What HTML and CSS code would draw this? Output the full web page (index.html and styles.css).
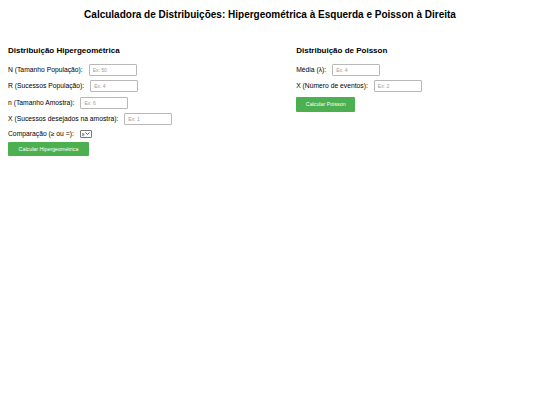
FILE: index.html
```html
<!DOCTYPE html>
<html lang="pt-BR">
<head>
  <meta charset="UTF-8">
  <meta name="viewport" content="width=device-width, initial-scale=1.0">
  <title>Calculadora de Distribuições</title>
  <link rel="stylesheet" href="styles.css">
</head>
<body>
  <h1>Calculadora de Distribuições: Hipergeométrica à Esquerda e Poisson à Direita</h1>

  <div class="container">
    <div class="coluna">
      <h3>Distribuição Hipergeométrica</h3>
      <div class="campo">
        <label for="N">N (Tamanho População):</label>
        <input type="number" id="N" placeholder="Ex: 50">
      </div>
      <div class="campo">
        <label for="R">R (Sucessos População):</label>
        <input type="number" id="R" placeholder="Ex: 4">
      </div>
      <div class="campo">
        <label for="n">n (Tamanho Amostra):</label>
        <input type="number" id="n" placeholder="Ex: 6">
      </div>
      <div class="campo">
        <label for="x">X (Sucessos desejados na amostra):</label>
        <input type="number" id="x" placeholder="Ex: 1">
      </div>
      <div class="campo">
        <label for="comparacao">Comparação (≥ ou =):</label>
        <span class="seletor">
          <select id="comparacao">
            <option value="maior">≥</option>
            <option value="igual">=</option>
          </select>
          <svg class="seta" viewBox="0 0 10 6" width="5" height="3"><path d="M1 1l4 4 4-4" fill="none" stroke="#333" stroke-width="1.6"/></svg>
        </span>
      </div>
      <button id="btnHiper" class="btn-hiper">Calcular Hipergeométrica</button>
      <p id="resultadoHiper" class="resultado"></p>
    </div>

    <div class="coluna">
      <h3>Distribuição de Poisson</h3>
      <div class="campo">
        <label for="lambda">Média (λ):</label>
        <input type="number" id="lambda" placeholder="Ex: 4">
      </div>
      <div class="campo">
        <label for="xPoisson">X (Número de eventos):</label>
        <input type="number" id="xPoisson" placeholder="Ex: 2">
      </div>
      <button id="btnPoisson" class="btn-poisson">Calcular Poisson</button>
      <p id="resultadoPoisson" class="resultado"></p>
    </div>
  </div>

  <script>
    function fatorial(k) {
      let r = 1;
      for (let i = 2; i <= k; i++) r *= i;
      return r;
    }

    function comb(a, b) {
      if (b < 0 || b > a) return 0;
      return fatorial(a) / (fatorial(b) * fatorial(a - b));
    }

    document.getElementById('btnHiper').addEventListener('click', function() {
      const N = parseInt(document.getElementById('N').value);
      const R = parseInt(document.getElementById('R').value);
      const n = parseInt(document.getElementById('n').value);
      const x = parseInt(document.getElementById('x').value);
      const modo = document.getElementById('comparacao').value;
      const saida = document.getElementById('resultadoHiper');

      if ([N, R, n, x].some(isNaN)) {
        saida.textContent = 'Preencha todos os campos';
        return;
      }

      let p = 0;
      const limite = modo === 'maior' ? Math.min(n, R) : x;
      for (let k = x; k <= limite; k++) {
        p += comb(R, k) * comb(N - R, n - k) / comb(N, n);
      }
      saida.textContent = `P = ${p.toFixed(4)}`;
    });

    document.getElementById('btnPoisson').addEventListener('click', function() {
      const lambda = parseFloat(document.getElementById('lambda').value);
      const x = parseInt(document.getElementById('xPoisson').value);
      const saida = document.getElementById('resultadoPoisson');

      if (isNaN(lambda) || isNaN(x)) {
        saida.textContent = 'Preencha todos os campos';
        return;
      }

      const p = Math.exp(-lambda) * Math.pow(lambda, x) / fatorial(x);
      saida.textContent = `P(X = ${x}) = ${p.toFixed(4)}`;
    });
  </script>
</body>
</html>
```

FILE: styles.css
```css
body {
  margin: 8px;
  font-family: 'Liberation Sans', Arial, sans-serif;
  color: #000;
  background: #fff;
}
h1 {
  font-size: 10px;
  text-align: center;
  margin: 1px 0 25px;
  line-height: 12px;
}
.container {
  display: flex;
  justify-content: space-between;
}
.coluna {
  width: 45%;
}
h3 {
  font-size: 8px;
  margin: 0 0 8px;
  line-height: 10px;
}
.campo {
  display: flex;
  align-items: center;
  gap: 6px;
  margin-bottom: 4.4px;
}
label {
  font-size: 6.75px;
  line-height: 8px;
  white-space: nowrap;
}
input {
  width: 48px;
  height: 12px;
  box-sizing: border-box;
  padding: 0 3px;
  border: 1px solid #b8b8b8;
  border-radius: 1px;
  font-size: 5px;
  font-family: inherit;
  outline: none;
}
input::placeholder {
  color: #9a9a9a;
}
.seletor {
  position: relative;
  display: inline-flex;
  align-items: center;
  width: 12px;
  height: 8px;
  box-sizing: border-box;
  border: 1px solid #777;
  border-radius: 1px;
}
.seletor select {
  appearance: none;
  -webkit-appearance: none;
  border: none;
  background: transparent;
  width: 100%;
  height: 100%;
  padding: 0 0 0 1px;
  font-size: 5px;
  line-height: 6px;
  font-family: inherit;
  outline: none;
}
.seta {
  position: absolute;
  right: 1px;
  top: 1.5px;
  pointer-events: none;
}
button {
  display: block;
  background: #4CAF50;
  color: #fff;
  border: none;
  border-radius: 1px;
  font-size: 5.3px;
  font-family: inherit;
  cursor: pointer;
  padding: 0;
  margin: 0;
}
.btn-hiper {
  width: 81px;
  height: 14px;
}
.btn-poisson {
  width: 59px;
  height: 15px;
}
button:hover {
  background: #45a049;
}
.resultado {
  font-size: 7px;
  margin-top: 6px;
}
```
